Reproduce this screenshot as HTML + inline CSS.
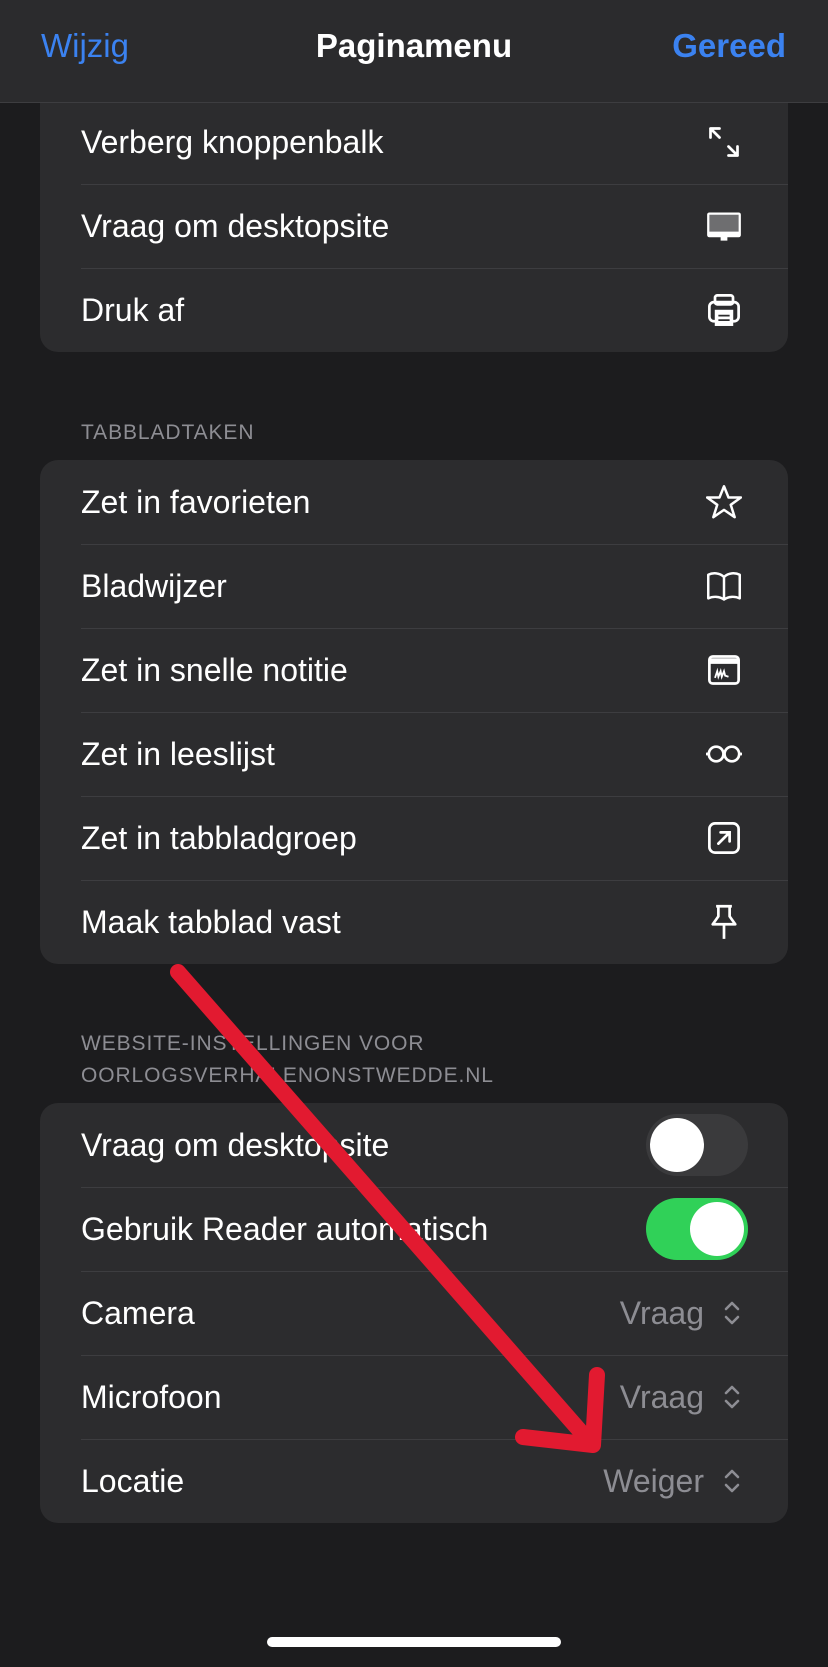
<!DOCTYPE html>
<html><head><meta charset="utf-8"><style>
*{margin:0;padding:0;box-sizing:border-box}
body{width:828px;height:1667px;background:#1c1c1e;font-family:"Liberation Sans",sans-serif;color:#fff;position:relative;overflow:hidden}
.hdr{position:absolute;top:0;left:0;width:828px;height:103px;background:#2b2b2d;border-bottom:1px solid #3d3d40;z-index:2}
.hdr span{position:absolute;top:27px;font-size:33px}
.card{position:absolute;left:40px;width:748px;background:#2c2c2e;border-radius:18px}
.row{height:84px;position:relative;display:flex;align-items:center;padding-left:41px;font-size:32px}
.row+.row:before{content:"";position:absolute;top:0;left:41px;right:0;height:1px;background:#3d3d40}
.ic{position:absolute;left:666px;top:24px;width:36px;height:36px}
.sec{position:absolute;left:81px;font-size:21px;color:#8d8d93;line-height:32px;letter-spacing:.9px}
.tg{position:absolute;left:606px;top:11px;width:102px;height:62px;border-radius:31px}
.kn{position:absolute;top:4px;width:54px;height:54px;border-radius:50%;background:#fff}
.val{position:absolute;right:84px;color:#8d8d93;font-size:32px}
.chev{position:absolute;left:683px;top:28px}
</style></head><body>
<div class="hdr">
<span style="left:41px;color:#3b82f0">Wijzig</span>
<span style="left:0;width:828px;text-align:center;font-weight:bold">Paginamenu</span>
<span style="right:42px;color:#3b82f0;font-weight:bold">Gereed</span>
</div>
<div class="card" style="top:100px;height:252px;border-radius:0 0 18px 18px">
<div class="row">Verberg knoppenbalk<svg class="ic" viewBox="0 0 32 32" fill="none" stroke="#fff" stroke-width="2.4" stroke-linecap="round"><path d="M4 4L12 12M4 4v8M4 4h8M28 28L20 20M28 28v-8M28 28h-8"/></svg></div>
<div class="row">Vraag om desktopsite<svg class="ic" viewBox="0 0 32 32"><rect x="1" y="4" width="30" height="22" rx="2" fill="#fff"/><rect x="3" y="6" width="26" height="15" fill="#6e6e70"/><rect x="13" y="25" width="6" height="4" fill="#fff"/></svg></div>
<div class="row">Druk af<svg class="ic" viewBox="0 0 32 32" fill="none" stroke="#fff" stroke-width="2.4"><rect x="8" y="3" width="16" height="8" rx="2"/><rect x="3" y="9" width="26" height="17" rx="4"/><rect x="9" y="17" width="14" height="12" fill="#fff"/><path d="M11 21h10M11 25h10" stroke="#2c2c2e" stroke-width="1.6"/></svg></div>
</div>
<div class="sec" style="top:417px">TABBLADTAKEN</div>
<div class="card" style="top:460px;height:504px">
<div class="row">Zet in favorieten<svg class="ic" viewBox="0 0 32 32" fill="none" stroke="#fff" stroke-width="2.2" stroke-linejoin="round"><path d="M16 2l4 10h11l-9 6.5 3.5 11L16 23l-9.5 6.5L10 18.5 1 12h11z"/></svg></div>
<div class="row">Bladwijzer<svg class="ic" viewBox="0 0 32 32" fill="none" stroke="#fff" stroke-width="2.2" stroke-linejoin="round"><path d="M16 8C12 4 6 4 2 6v21c4-2 10-2 14 1 4-3 10-3 14-1V6c-4-2-10-2-14 2zM16 8v20"/></svg></div>
<div class="row">Zet in snelle notitie<svg class="ic" viewBox="0 0 32 32" fill="none" stroke="#fff" stroke-width="2.4"><rect x="3" y="4" width="26" height="24" rx="3"/><path d="M3 8h26" stroke-width="5"/><path d="M8 23l2-6 1 5 2-5 1 5 2-5 1 4 3 1" stroke-width="1.6"/></svg></div>
<div class="row">Zet in leeslijst<svg class="ic" viewBox="0 0 32 32" fill="none" stroke="#fff" stroke-width="2.4" style="left:660px;width:48px"><circle cx="9" cy="16" r="6.5"/><circle cx="23" cy="16" r="6.5"/><path d="M15.5 16h1M0 16h2.5M29.5 16h2.5"/></svg></div>
<div class="row">Zet in tabbladgroep<svg class="ic" viewBox="0 0 32 32" fill="none" stroke="#fff" stroke-width="2.4" stroke-linecap="round"><rect x="3" y="3" width="26" height="26" rx="5"/><path d="M11 21l10-10M13 11h8v8"/></svg></div>
<div class="row">Maak tabblad vast<svg class="ic" viewBox="0 0 32 32" fill="none" stroke="#fff" stroke-width="2.4" stroke-linejoin="round"><path d="M9 2h14M11 2v9l-5 7h20l-5-7V2M16 18v13"/></svg></div>
</div>
<div class="sec" style="top:1028px">WEBSITE-INSTELLINGEN VOOR<br>OORLOGSVERHALENONSTWEDDE.NL</div>
<div class="card" style="top:1103px;height:420px">
<div class="row">Vraag om desktopsite<div class="tg" style="background:#3a3a3c"><div class="kn" style="left:4px"></div></div></div>
<div class="row">Gebruik Reader automatisch<div class="tg" style="background:#30d158"><div class="kn" style="right:4px"></div></div></div>
<div class="row">Camera<span class="val">Vraag</span><svg class="chev" width="18" height="28" viewBox="0 0 18 28" fill="none" stroke="#8d8d93" stroke-width="2.6" stroke-linecap="round" stroke-linejoin="round"><path d="M3 10l6-6 6 6M3 18l6 6 6-6"/></svg></div>
<div class="row">Microfoon<span class="val">Vraag</span><svg class="chev" width="18" height="28" viewBox="0 0 18 28" fill="none" stroke="#8d8d93" stroke-width="2.6" stroke-linecap="round" stroke-linejoin="round"><path d="M3 10l6-6 6 6M3 18l6 6 6-6"/></svg></div>
<div class="row">Locatie<span class="val">Weiger</span><svg class="chev" width="18" height="28" viewBox="0 0 18 28" fill="none" stroke="#8d8d93" stroke-width="2.6" stroke-linecap="round" stroke-linejoin="round"><path d="M3 10l6-6 6 6M3 18l6 6 6-6"/></svg></div>
</div>
<svg style="position:absolute;left:0;top:0;z-index:3" width="828" height="1667" fill="none" stroke="#e21a30" stroke-width="16" stroke-linecap="round" stroke-linejoin="round"><path d="M178 972L588 1440M597 1375L593 1445L523 1437"/></svg>
<div style="position:absolute;left:267px;top:1637px;width:294px;height:10px;border-radius:5px;background:#fff"></div>
</body></html>
